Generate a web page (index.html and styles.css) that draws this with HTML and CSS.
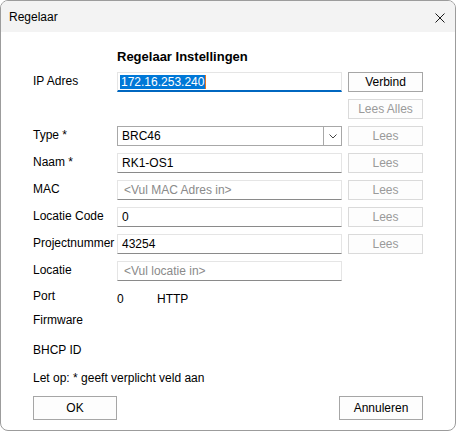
FILE: index.html
```html
<!DOCTYPE html>
<html lang="nl">
<head>
    <meta charset="UTF-8">
    <meta name="viewport" content="width=device-width, initial-scale=1.0">
    <title>Regelaar</title>
    <link rel="stylesheet" href="styles.css">
</head>
<body>
    <div class="window">
        <div class="titlebar">
            <span class="title">Regelaar</span>
            <svg class="close" width="10" height="10" viewBox="0 0 10 10">
                <path d="M0.5 0.5 L9.5 9.5 M9.5 0.5 L0.5 9.5" stroke="#1a1a1a" stroke-width="1" fill="none"/>
            </svg>
        </div>
        <div class="content">
            <div class="form">
                <div class="heading">Regelaar Instellingen</div>

                <div class="label">IP Adres</div>
                <div class="field focused"><span class="selected">172.16.253.240</span><span class="caret"></span></div>
                <button class="btn">Verbind</button>

                <button class="btn disabled">Lees Alles</button>

                <div class="label">Type *</div>
                <div class="field select">
                    <span class="value">BRC46</span>
                    <span class="arrow">
                        <svg width="8" height="5" viewBox="0 0 8 5"><path d="M0.5 0.5 L4 4 L7.5 0.5" stroke="#444" fill="none"/></svg>
                    </span>
                </div>
                <button class="btn disabled">Lees</button>

                <div class="label">Naam *</div>
                <div class="field">RK1-OS1</div>
                <button class="btn disabled">Lees</button>

                <div class="label">MAC</div>
                <div class="field placeholder">&lt;Vul MAC Adres in&gt;</div>
                <button class="btn disabled">Lees</button>

                <div class="label">Locatie Code</div>
                <div class="field">0</div>
                <button class="btn disabled">Lees</button>

                <div class="label">Projectnummer</div>
                <div class="field">43254</div>
                <button class="btn disabled">Lees</button>

                <div class="label">Locatie</div>
                <div class="field placeholder">&lt;Vul locatie in&gt;</div>
            </div>

            <div class="info">
                <div class="info-row port">
                    <span class="info-label">Port</span>
                    <span class="port-num">0</span>
                    <span class="port-proto">HTTP</span>
                </div>
                <div class="info-row firmware">
                    <span class="info-label">Firmware</span>
                </div>
                <div class="info-row bhcp">
                    <span class="info-label">BHCP ID</span>
                </div>
                <div class="info-row note">Let op: * geeft verplicht veld aan</div>
            </div>

            <div class="footer">
                <button class="btn big">OK</button>
                <button class="btn big">Annuleren</button>
            </div>
        </div>
    </div>
</body>
</html>
```

FILE: styles.css
```css
* {
    box-sizing: border-box;
}

body {
    margin: 0;
    font-family: "Liberation Sans", Arial, sans-serif;
    font-size: 12px;
    color: #000;
    background: #fff;
}

.window {
    width: 456px;
    height: 431px;
    border: 1px solid #9c9c9c;
    border-radius: 8px;
    overflow: hidden;
    background: #fff;
}

.titlebar {
    height: 31px;
    background: #f3f3f3;
    display: flex;
    align-items: center;
    justify-content: space-between;
    padding: 0 10px 0 8px;
}

.title {
    line-height: 14px;
    padding-top: 1px;
}

.close {
    display: block;
    margin-top: 2px;
}

.content {
    padding: 17px 32px 0 32px;
}

.form {
    display: grid;
    grid-template-columns: 84px 225px 81px;
    grid-template-rows: 16px;
    grid-auto-rows: 20px;
    row-gap: 7px;
}

.heading {
    grid-column: 2 / 4;
    font-weight: bold;
    font-size: 13px;
    line-height: 16px;
}

.label {
    grid-column: 1;
    line-height: 18px;
    white-space: nowrap;
}

.field {
    grid-column: 2;
    height: 20px;
    border: 1px solid #e5e5e5;
    border-bottom-color: #8a8a8a;
    padding: 0 4px;
    line-height: 18px;
    display: flex;
    align-items: center;
    white-space: nowrap;
}

.field.focused {
    border-bottom: 2px solid #0067c0;
    padding-left: 2px;
}

.selected {
    background: #0078d7;
    color: #fff;
    line-height: 14px;
    padding: 0 1px;
}

.caret {
    width: 1px;
    height: 14px;
    background: #e8741c;
}

.placeholder {
    color: #8a8a8a;
    padding-left: 6px;
}

.select {
    border: 1px solid #a8a8a8;
    padding-right: 0;
    justify-content: space-between;
}

.arrow {
    width: 18px;
    height: 18px;
    border-left: 1px solid #a8a8a8;
    display: flex;
    align-items: center;
    justify-content: center;
}

.btn {
    grid-column: 3;
    margin-left: 6px;
    font-family: inherit;
    font-size: 12px;
    height: 20px;
    background: #fdfdfd;
    border: 1px solid #a6a6a6;
    color: #000;
    padding: 0;
    line-height: 18px;
}

.btn.disabled {
    border-color: #dadada;
    color: #9a9a9a;
}

.info {
    margin-top: 8px;
}

.info-row {
    display: flex;
    line-height: 14px;
}

.info-label {
    width: 84px;
}

.port {
    height: 24px;
}

.port-num {
    width: 40px;
    padding-top: 3px;
}

.port-proto {
    padding-top: 3px;
}

.firmware {
    height: 30px;
}

.bhcp {
    height: 28px;
}

.note {
    height: 25px;
}

.footer {
    display: flex;
    justify-content: space-between;
}

.btn.big {
    margin-left: 0;
    width: 84px;
    height: 24px;
    line-height: 22px;
}
```
